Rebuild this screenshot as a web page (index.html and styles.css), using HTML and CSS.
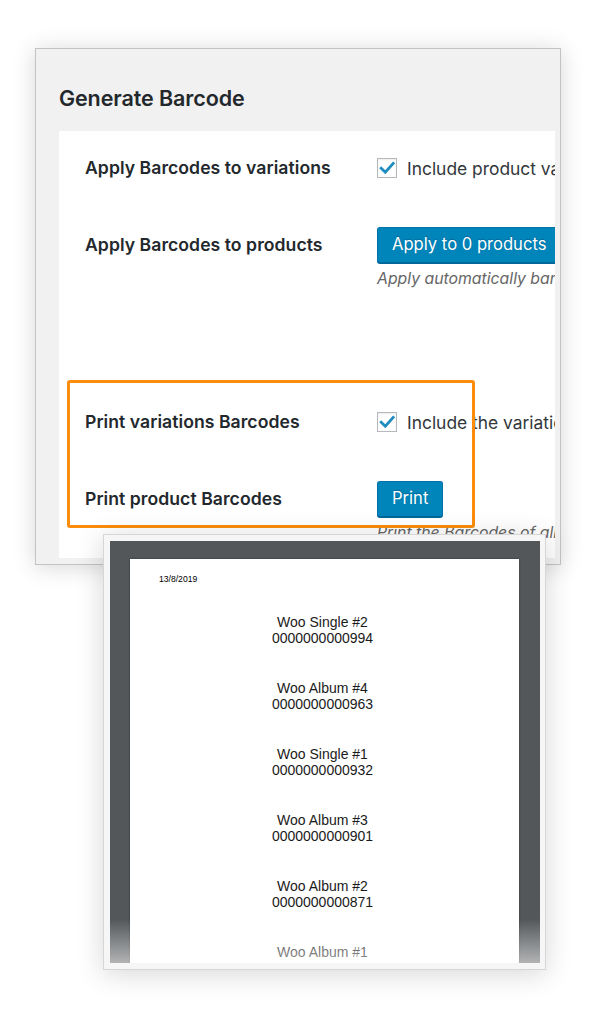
FILE: index.html
```html
<!DOCTYPE html>
<html>
<head>
<meta charset="utf-8">
<title>Generate Barcode</title>
<link rel="stylesheet" href="styles.css">
</head>
<body>
<div class="stage">
  <section class="panel">
    <h2 class="title">Generate Barcode</h2>
    <div class="card">
      <div class="row row-1">
        <div class="label">Apply Barcodes to variations</div>
        <div class="control">
          <label class="check-line">
            <span class="checkbox"><svg viewBox="0 0 20 20" width="20" height="20"><path d="M4.2 10.2 L8.3 14.2 L16.2 5.4" fill="none" stroke="#1e8cbe" stroke-width="2.8" stroke-linecap="square" stroke-linejoin="miter"/></svg></span>
            <span>Include product variations</span>
          </label>
        </div>
      </div>
      <div class="row row-2">
        <div class="label">Apply Barcodes to products</div>
        <div class="control">
          <span class="button">Apply to 0 products</span>
          <p class="desc">Apply automatically barcodes to all products</p>
        </div>
      </div>
      <div class="row row-3">
        <div class="label">Print variations Barcodes</div>
        <div class="control">
          <label class="check-line">
            <span class="checkbox"><svg viewBox="0 0 20 20" width="20" height="20"><path d="M4.2 10.2 L8.3 14.2 L16.2 5.4" fill="none" stroke="#1e8cbe" stroke-width="2.8" stroke-linecap="square" stroke-linejoin="miter"/></svg></span>
            <span>Include the variations</span>
          </label>
        </div>
      </div>
      <div class="row row-4">
        <div class="label">Print product Barcodes</div>
        <div class="control">
          <span class="button">Print</span>
          <p class="desc">Print the Barcodes of all products</p>
        </div>
      </div>
    </div>
  </section>

  <div class="highlight"></div>

  <section class="preview">
    <div class="viewer">
      <div class="sheet">
        <div class="date">13/8/2019</div>
        <div class="items">
          <div class="item"><div>Woo Single #2</div><div>0000000000994</div></div>
          <div class="item"><div>Woo Album #4</div><div>0000000000963</div></div>
          <div class="item"><div>Woo Single #1</div><div>0000000000932</div></div>
          <div class="item"><div>Woo Album #3</div><div>0000000000901</div></div>
          <div class="item"><div>Woo Album #2</div><div>0000000000871</div></div>
          <div class="item"><div>Woo Album #1</div><div>0000000000839</div></div>
        </div>
      </div>
      <div class="fade"></div>
    </div>
  </section>
</div>
</body>
</html>
```

FILE: styles.css
```css
html, body {
  margin: 0;
  padding: 0;
  background: #ffffff;
}

body {
  font-family: "Inter", "Roboto", "Liberation Sans", sans-serif;
  color: #23282d;
  height: 1017px;
  overflow: hidden;
}

.stage {
  position: relative;
  width: 600px;
  height: 1017px;
  padding-top: 48px;
  box-sizing: border-box;
}

.panel {
  margin-left: 35px;
  width: 524px;
  height: 515px;
  box-sizing: content-box;
  border: 1px solid #c3c3c3;
  background: #f1f1f1;
  box-shadow: 0 2px 22px rgba(0, 0, 0, 0.16);
  display: flex;
  flex-direction: column;
}

.title {
  margin: 0;
  padding: 35px 0 0 23px;
  height: 47px;
  font-size: 21.5px;
  line-height: 28px;
  font-weight: 600;
  color: #23282d;
  letter-spacing: -0.1px;
}

.card {
  margin-left: 23px;
  width: 496px;
  height: 427px;
  background: #ffffff;
  overflow: hidden;
  box-sizing: border-box;
  padding-left: 26px;
}

.row {
  display: flex;
  align-items: flex-start;
}

.row-1 { margin-top: 19px; }
.row-2 { margin-top: 41px; }
.row-3 { margin-top: 115px; }
.row-4 { margin-top: 41px; }

.label {
  flex: none;
  width: 292px;
  font-size: 17.6px;
  line-height: 36px;
  font-weight: 600;
  color: #23282d;
  white-space: nowrap;
  letter-spacing: 0.05px;
}

.control {
  white-space: nowrap;
  font-size: 17.4px;
  color: #32373c;
}

.check-line {
  display: flex;
  align-items: center;
  gap: 10px;
  height: 36px;
}

.checkbox {
  flex: none;
  width: 20px;
  height: 20px;
  box-sizing: border-box;
  border: 1px solid #b4b9be;
  background: #ffffff;
  box-shadow: inset 0 1px 2px rgba(0, 0, 0, 0.08);
  position: relative;
}

.checkbox svg {
  position: absolute;
  left: -1px;
  top: -1px;
}

.button {
  display: inline-block;
  height: 36px;
  box-sizing: border-box;
  padding: 0 14px;
  line-height: 33px;
  background: #0085ba;
  border: 1px solid #0073aa;
  border-bottom-color: #006799;
  border-radius: 3px;
  box-shadow: 0 1px 0 #006799;
  color: #ffffff;
  font-size: 16.6px;
  text-shadow: 0 -1px 1px #006799;
}

.desc {
  margin: 6px 0 0;
  line-height: 20px;
  font-size: 15.8px;
  font-style: italic;
  color: #666666;
}

.highlight {
  position: absolute;
  left: 67px;
  top: 380px;
  width: 408px;
  height: 148px;
  box-sizing: border-box;
  border: 3px solid #fb8c0c;
  border-radius: 3px;
}

.preview {
  position: absolute;
  left: 103px;
  top: 534px;
  width: 443px;
  height: 436px;
  box-sizing: border-box;
  border: 1px solid #d6d6d6;
  background: #f6f6f6;
  padding: 6px 5px 6px 6px;
  box-shadow: 0 4px 26px rgba(0, 0, 0, 0.16);
}

.viewer {
  position: relative;
  height: 100%;
  background: #53575a;
  overflow: hidden;
  padding: 18px 21px 0 20px;
  box-sizing: border-box;
}

.sheet {
  background: #ffffff;
  height: 440px;
  font-family: "Liberation Sans", Arial, sans-serif;
  color: #1a1a1a;
  box-shadow: 0 0 2px rgba(0, 0, 0, 0.4);
}

.date {
  padding: 14px 0 0 29px;
  font-size: 8.6px;
  line-height: 12px;
  color: #000000;
}

.items {
  padding-top: 29px;
  display: flex;
  flex-direction: column;
  align-items: center;
  gap: 34px;
}

.item {
  text-align: center;
  font-size: 14px;
  line-height: 16px;
  padding-right: 4px;
}

.fade {
  position: absolute;
  left: 0;
  right: 0;
  bottom: 0;
  height: 44px;
  background: linear-gradient(to bottom, rgba(255, 255, 255, 0), rgba(255, 255, 255, 0.55));
}
```
